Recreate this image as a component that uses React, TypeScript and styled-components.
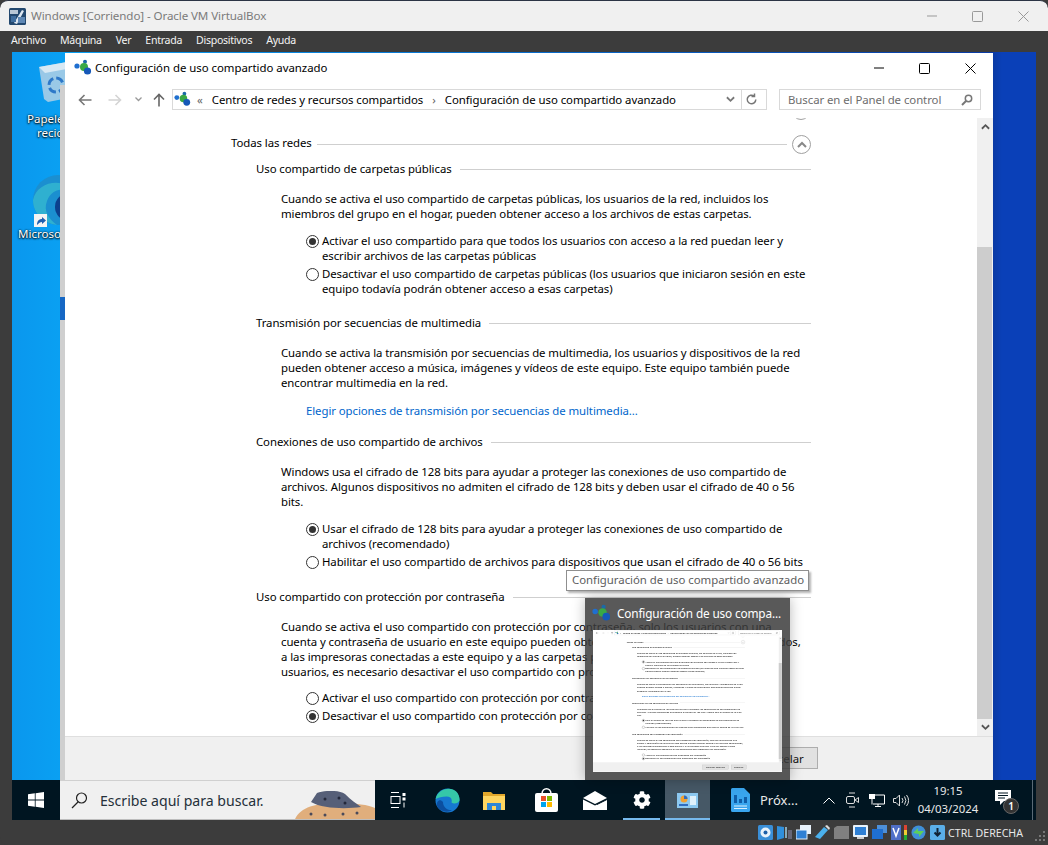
import React from "react";
import styled, { createGlobalStyle } from "styled-components";
import { FaCog } from "react-icons/fa";

const Global = createGlobalStyle`
  html, body { margin: 0; padding: 0; background: #3c3c3c; }
  * { box-sizing: border-box; }
`;
const UI = `"Noto Sans", "Liberation Sans", sans-serif`;

const Root = styled.div`
  width: 1048px; height: 845px; overflow: hidden; background: #3c3c3c;
  display: flex; flex-direction: column; font-family: ${UI}; position: relative;
  border-radius: 8px 8px 8px 8px;
`;
const HostTitle = styled.header`
  height: 31px; flex: none; background: #f0f0f0; display: flex; align-items: center;
  padding-left: 9px; border-top: 1px solid #2b3445; border-radius: 8px 8px 0 0;
`;
const HostTitleText = styled.span`
  margin-left: 5px; padding-bottom: 2px; font-size: 11.6px; letter-spacing: -.1px; color: #7b7b7b; white-space: nowrap; flex: 1;
`;
const HostButtons = styled.div`
  display: flex; align-items: center; gap: 35px; padding-right: 19px;
  svg { display: block; }
`;
const Menu = styled.nav`
  height: 21px; flex: none; display: flex; align-items: center; padding: 0 0 4px 11px; gap: 14px;
  color: #f4f4f4; font-size: 10.6px; letter-spacing: -.3px;
`;
const Stage = styled.div`
  flex: none; height: 768px; margin: 0 12px; display: flex; flex-direction: column;
`;
const Desktop = styled.main`
  height: 728px; flex: none; position: relative; overflow: hidden;
  background: linear-gradient(90deg, #0a97ee 0, #0aa0f2 48px, #0a3aa4 981px, #0a40b8 990px, #0a40b8 100%);
`;
const DeskIcon = styled.div<{ $left: number; $top: number }>`
  position: absolute; left: ${(p) => p.$left}px; top: ${(p) => p.$top}px;
`;
const DeskLabel = styled.div<{ $left: number; $top: number }>`
  position: absolute; left: ${(p) => p.$left}px; top: ${(p) => p.$top}px; color: #fff; font-size: 11.5px;
  line-height: 14px; white-space: nowrap; text-shadow: 0 1px 2px #000, 0 0 2px #000;
`;
const BackStrip = styled.div`
  position: absolute; left: 48px; top: 33px; bottom: 0; width: 6px; background: #cfcfcf;
  &::after { content: ""; position: absolute; left: 0; top: 212px; width: 5px; height: 23px; background: #1667c4; }
`;
const ExplorerWindow = styled.section`
  position: absolute; left: 53px; top: 1px; width: 928px; height: 727px; background: #fff;
  display: flex; flex-direction: column;
`;
const WinTitle = styled.div`
  height: 32px; flex: none; display: flex; align-items: center; padding: 0 17px 2px 9px;
`;
const WinTitleText = styled.span`
  flex: 1; margin-left: 3px; padding-bottom: 2px; font-size: 11.4px; letter-spacing: -.02px; color: #000; white-space: nowrap;
`;
const WinButtons = styled.div`
  display: flex; align-items: center; gap: 35px; svg { display: block; }
`;
const BodyWrap = styled.div`
  width: 928px; height: 695px; display: flex; flex-direction: column; background: #fff;
`;
const NavRow = styled.div`
  height: 33px; flex: none; display: flex; align-items: flex-start; padding: 4px 12px 0 13px;
`;
const NavArrows = styled.div`
  width: 94px; height: 21px; flex: none; display: flex; align-items: center; svg { display: block; }
`;
const NavSpace = styled.span<{ $w: number }>`
  width: ${(p) => p.$w}px; flex: none;
`;
const AddressBox = styled.div`
  width: 595px; height: 21px; flex: none; border: 1px solid #d9d9d9; display: flex; align-items: center;
  padding-left: 1px; font-size: 11.4px; letter-spacing: -.05px; color: #000; white-space: nowrap;
`;
const Crumb = styled.span<{ $left: number; $dim?: boolean }>`
  margin-left: ${(p) => p.$left}px; color: ${(p) => (p.$dim ? "#666" : "#000")};
`;
const AddressEnd = styled.div`
  margin-left: auto; width: 40px; height: 19px; display: flex; align-items: center; svg { display: block; }
`;
const Sep = styled.span`
  width: 1px; height: 19px; background: #d9d9d9; margin: 0 3px 0 6px;
`;
const SearchBox = styled.div`
  width: 202px; height: 21px; margin-left: 12px; flex: none; border: 1px solid #d9d9d9; display: flex;
  align-items: center; justify-content: space-between; padding: 0 7px 0 8px; font-size: 11.4px; letter-spacing: -.06px; color: #6d6d6d; white-space: nowrap;
`;
const Middle = styled.div`
  flex: 1; min-height: 0; display: flex;
`;
const Scroller = styled.div`
  flex: 1; min-width: 0; position: relative; overflow: hidden; padding: 17px 0 0 166px;
`;
const CutChevron = styled.div`
  position: absolute; left: 727px; top: -16px; width: 18px; height: 18px; border: 1px solid #a0a0a0; border-radius: 50%;
`;
const Bar = styled.div`
  width: 16px; flex: none; background: #f0f0f0; display: flex; flex-direction: column; align-items: center;
  svg { display: block; }
`;
const BarEnd = styled.div`
  height: 17px; width: 100%; flex: none; display: flex; align-items: center; justify-content: center;
`;
const BarGap = styled.div`height: 112px; flex: none;`;
const BarThumb = styled.div`
  flex: 1; width: 15px; margin-right: 1px; background: #cdcdcd;
`;
const HeadRow = styled.div<{ $top?: number }>`
  display: flex; align-items: center; height: 15px; margin-top: ${(p) => p.$top ?? 0}px; margin-right: 166px;
  font-size: 11.4px; letter-spacing: -.075px; color: #000; white-space: nowrap;
`;
const Rule = styled.span<{ $gap: number; $drop?: number }>`
  flex: 1; height: 1px; background: #cfcfcf; margin-left: ${(p) => p.$gap}px; margin-top: ${(p) => p.$drop ?? 2}px;
`;
const CircleBtn = styled.span`
  width: 19px; height: 19px; margin: 4px 0 0 5px; flex: none; border-radius: 50%; border: 1px solid #a0a0a0; display: flex; align-items: center; justify-content: center;
  svg { display: block; }
`;
const Section = styled.div`
  padding-left: 25px;
`;
const Para = styled.p<{ $top: number }>`
  margin: ${(p) => p.$top}px 0 0 25px; font-size: 11.4px; letter-spacing: -.075px; line-height: 15px; color: #000; white-space: nowrap;
`;
const LinkLine = styled.a`
  display: block; margin: 13px 0 0 50px; font-size: 11.4px; letter-spacing: -.075px; line-height: 15px; color: #0066cc; white-space: nowrap;
`;
const RadioRow = styled.label<{ $top: number }>`
  display: flex; margin: ${(p) => p.$top}px 0 0 50px; font-size: 11.4px; letter-spacing: -.075px; line-height: 15px; color: #000; white-space: nowrap;
`;
const RadioDot = styled.span<{ $on?: boolean }>`
  width: 13px; height: 13px; flex: none; margin: 2px 3px 0 0; border-radius: 50%; border: 1px solid #333; background: #fff;
  display: flex; align-items: center; justify-content: center;
  &::after { content: ""; width: 7px; height: 7px; border-radius: 50%; background: ${(p) => (p.$on ? "#333" : "transparent")}; }
`;
const Footer = styled.footer`
  height: 44px; flex: none; border-top: 1px solid #dfdfdf; background: #f0f0f0; display: flex; justify-content: flex-end;
  gap: 13px; padding: 10px 175px 0 0;
`;
const FootBtn = styled.button<{ $w: number }>`
  width: ${(p) => p.$w}px; height: 22px; border: 1px solid #adadad; background: #e1e1e1; padding: 0; font: 11.4px ${UI}; color: #111;
  display: flex; align-items: center; justify-content: center; gap: 4px;
`;
const Taskbar = styled.div`
  height: 40px; flex: none; background: #001521; display: flex; align-items: stretch; position: relative; color: #fff;
`;
const StartBtn = styled.div`
  width: 48px; flex: none; display: flex; align-items: center; justify-content: center;
`;
const SearchBar = styled.div`
  width: 315px; flex: none; background: #f0f0f0; border-bottom: 1px solid #bdbdbd; border-top: 1px solid #d0d0d0; display: flex; align-items: center;
  padding-left: 11px; color: #25303a; font-size: 14.1px; position: relative; white-space: nowrap; overflow: hidden;
`;
const SearchText = styled.span`margin-left: 12px;`;
const Rock = styled.svg`position: absolute; right: 0; bottom: 0; display: block;`;
const TaskIcon = styled.div<{ $w: number; $ml?: number; $active?: boolean; $under?: boolean }>`
  width: ${(p) => p.$w}px; margin-left: ${(p) => p.$ml ?? 0}px; flex: none; display: flex; align-items: center; justify-content: center; position: relative;
  background: ${(p) => (p.$active ? "#465866" : "transparent")};
  svg { display: block; }
  &::after { content: ""; position: absolute; left: 0; right: 0; bottom: 0; height: 2px; background: ${(p) => (p.$under ? "#76b9ed" : "transparent")}; }
`;
const TaskApp = styled.div`
  width: 100px; flex: none; display: flex; align-items: center; padding-left: 21px; gap: 10px; font-size: 13px; color: #eaeaea; white-space: nowrap;
  svg { display: block; }
`;
const Tray = styled.div`
  flex: 1; display: flex; align-items: center; padding-left: 7px; color: #fff;
  svg { display: block; }
`;
const TrayIcon = styled.div<{ $w: number }>`
  width: ${(p) => p.$w}px; flex: none; display: flex; justify-content: center;
`;
const Clock = styled.div`
  width: 72px; margin-left: 1px; flex: none; text-align: center; font-size: 11.4px; line-height: 18px; color: #e8e8e8;
`;
const Notify = styled.div`
  margin-left: 11px; position: relative; width: 24px; height: 24px; flex: none;
`;
const Badge = styled.span`
  position: absolute; left: 8px; top: 10px; width: 16px; height: 16px; border-radius: 50%; background: #333; border: 1px solid #666;
  font-size: 10px; line-height: 14px; text-align: center; color: #fff; font-weight: 600;
`;
const TaskEdge = styled.span`
  width: 1px; align-self: stretch; background: #5a6a76; margin-left: 13px; flex: none;
`;
const Status = styled.footer`
  height: 25px; flex: none; display: flex; align-items: center; justify-content: flex-end; padding: 0 25px 0 0; color: #e8e8e8; font-size: 10.6px;
  position: relative; white-space: nowrap;
`;
const StatusIcons = styled.div`
  display: flex; align-items: center; gap: 4px; margin-right: 3px; svg { display: block; }
`;
const Meter = styled.svg`margin-left: -3px;`;
const Grip = styled.svg`position: absolute; right: 1px; bottom: 2px; display: block;`;
const Tooltip = styled.div`
  position: absolute; left: 566px; top: 570px; width: 243px; height: 21px; background: #fff; border: 1px solid #8f8f8f; color: #5d5d5d;
  font-size: 11.4px; letter-spacing: -.03px; line-height: 17px; padding-left: 5px; white-space: nowrap; box-shadow: 2px 2px 2px rgba(0,0,0,.3);
`;
const Thumb = styled.div`
  position: absolute; left: 585px; top: 598px; width: 205px; height: 182px; background: rgba(60,60,60,.85); box-shadow: 0 0 12px rgba(0,0,0,.28);
`;
const ThumbHead = styled.div`
  height: 32px; display: flex; align-items: center; padding: 0 0 2px 7px; color: #fff; font-size: 11.8px; letter-spacing: -.15px; white-space: nowrap; gap: 6px;
`;
const Preview = styled.div`
  width: 189px; height: 142px; margin-left: 8px; overflow: hidden; background: #fff;
`;
const PreviewScale = styled.div`
  width: 928px; height: 695px; transform: scale(0.2037); transform-origin: 0 0; filter: blur(.25px);
`;

const NetIcon = ({ s = 18 }: { s?: number }) => (
  <svg width={s} height={s} viewBox="0 0 18 18">
    <circle cx="3" cy="7" r="2.6" fill="#1f6fd0" />
    <circle cx="11" cy="2.8" r="2" fill="#1b6aa8" />
    <circle cx="10" cy="8" r="4" fill="#3aa845" />
    <circle cx="13.5" cy="12" r="3.6" fill="#1658b8" />
  </svg>
);
const Line = ({ w = 10, c = "#888" }: { w?: number; c?: string }) => (
  <svg width={w} height="2" viewBox={`0 0 ${w} 2`}><path d={`M0 1H${w}`} stroke={c} strokeWidth="1" /></svg>
);
const Sq = ({ c }: { c: string }) => (
  <svg width="11" height="11" viewBox="0 0 11 11"><rect x=".5" y=".5" width="10" height="10" rx="1" fill="none" stroke={c} /></svg>
);
const X = ({ c }: { c: string }) => (
  <svg width="11" height="11" viewBox="0 0 11 11"><path d="M.5.5l10 10M10.5.5l-10 10" stroke={c} /></svg>
);
const Chev = ({ up, c = "#555", w = 10 }: { up?: boolean; c?: string; w?: number }) => (
  <svg width={w} height="7" viewBox="0 0 10 7"><path d={up ? "M1 6l4-4 4 4" : "M1 1l4 4 4-4"} fill="none" stroke={c} strokeWidth="2" /></svg>
);
const ArrowL = ({ c }: { c: string }) => (
  <svg width="14" height="12" viewBox="0 0 14 12"><path d="M13.5 6H1.5M6.5 1l-5 5 5 5" fill="none" stroke={c} strokeWidth="1.6" /></svg>
);
const ArrowR = ({ c }: { c: string }) => (
  <svg width="14" height="12" viewBox="0 0 14 12"><path d="M.5 6H12.500M7.500 1l5 5-5 5" fill="none" stroke={c} strokeWidth="1.6" /></svg>
);
const ArrowUp = () => (
  <svg width="12" height="14" viewBox="0 0 12 14"><path d="M6 13.5V1.5M1 6.5l5-5 5 5" fill="none" stroke="#666" strokeWidth="1.6" /></svg>
);
const HostLogo = () => (
  <svg width="17" height="17" viewBox="0 0 17 17">
    <rect width="17" height="17" rx="1.5" fill="#23486f" />
    <rect x="1" y="2" width="8" height="4" fill="#b9c7d6" />
    <path d="M5 15L13 2l2 1-7 13z" fill="#dfe8f2" />
    <rect x="9" y="9" width="7" height="6" fill="#5f88b5" />
    <rect x="2" y="8" width="5" height="6" fill="#3f6d9e" />
  </svg>
);

const WindowBody = () => (
  <BodyWrap>
    <NavRow>
      <NavArrows>
        <ArrowL c="#777" />
        <NavSpace $w={16} />
        <ArrowR c="#d4d4d4" />
        <NavSpace $w={13} />
        <svg width="7" height="5" viewBox="0 0 7 5"><path d="M.5.5l3 3 3-3" fill="none" stroke="#999" strokeWidth="1.3" /></svg>
        <NavSpace $w={11} />
        <ArrowUp />
      </NavArrows>
      <AddressBox>
        <NetIcon s={17} />
        <Crumb $left={6} $dim>«</Crumb>
        <Crumb $left={9}>Centro de redes y recursos compartidos</Crumb>
        <Crumb $left={9} $dim>›</Crumb>
        <Crumb $left={9}>Configuración de uso compartido avanzado</Crumb>
        <AddressEnd>
          <Chev c="#777" w={9} />
          <Sep />
          <svg width="13" height="13" viewBox="0 0 13 13"><path d="M10.8 6.5a4.3 4.3 0 1 1-1.6-3.4M9.5 .5v3h-3" fill="none" stroke="#777" strokeWidth="1.5" /></svg>
        </AddressEnd>
      </AddressBox>
      <SearchBox>
        Buscar en el Panel de control
        <svg width="12" height="12" viewBox="0 0 12 12"><circle cx="7.5" cy="4.5" r="3.2" fill="none" stroke="#777" strokeWidth="1.5" /><path d="M5 7l-4 4" stroke="#777" strokeWidth="2" /></svg>
      </SearchBox>
    </NavRow>
    <Middle>
      <Scroller>
        <CutChevron />
        <HeadRow>
          Todas las redes
          <Rule $gap={5} $drop={4} />
          <CircleBtn><Chev up c="#888" w={10} /></CircleBtn>
        </HeadRow>
        <Section>
          <HeadRow $top={11}>
            Uso compartido de carpetas públicas
            <Rule $gap={8} />
          </HeadRow>
          <Para $top={15}>
            Cuando se activa el uso compartido de carpetas públicas, los usuarios de la red, incluidos los<br />
            miembros del grupo en el hogar, pueden obtener acceso a los archivos de estas carpetas.
          </Para>
          <RadioRow $top={12}>
            <RadioDot $on />
            <span>Activar el uso compartido para que todos los usuarios con acceso a la red puedan leer y<br />escribir archivos de las carpetas públicas</span>
          </RadioRow>
          <RadioRow $top={3}>
            <RadioDot />
            <span>Desactivar el uso compartido de carpetas públicas (los usuarios que iniciaron sesión en este<br />equipo todavía podrán obtener acceso a esas carpetas)</span>
          </RadioRow>
          <HeadRow $top={19}>
            Transmisión por secuencias de multimedia
            <Rule $gap={8} />
          </HeadRow>
          <Para $top={15}>
            Cuando se activa la transmisión por secuencias de multimedia, los usuarios y dispositivos de la red<br />
            pueden obtener acceso a música, imágenes y vídeos de este equipo. Este equipo también puede<br />
            encontrar multimedia en la red.
          </Para>
          <LinkLine>Elegir opciones de transmisión por secuencias de multimedia...</LinkLine>
          <HeadRow $top={16}>
            Conexiones de uso compartido de archivos
            <Rule $gap={8} />
          </HeadRow>
          <Para $top={15}>
            Windows usa el cifrado de 128 bits para ayudar a proteger las conexiones de uso compartido de<br />
            archivos. Algunos dispositivos no admiten el cifrado de 128 bits y deben usar el cifrado de 40 o 56<br />
            bits.
          </Para>
          <RadioRow $top={12}>
            <RadioDot $on />
            <span>Usar el cifrado de 128 bits para ayudar a proteger las conexiones de uso compartido de<br />archivos (recomendado)</span>
          </RadioRow>
          <RadioRow $top={3}>
            <RadioDot />
            <span>Habilitar el uso compartido de archivos para dispositivos que usan el cifrado de 40 o 56 bits</span>
          </RadioRow>
          <HeadRow $top={20}>
            Uso compartido con protección por contraseña
            <Rule $gap={8} />
          </HeadRow>
          <Para $top={15}>
            Cuando se activa el uso compartido con protección por contraseña, solo los usuarios con una<br />
            cuenta y contraseña de usuario en este equipo pueden obtener acceso a los archivos compartidos,<br />
            a las impresoras conectadas a este equipo y a las carpetas públicas. Para dar acceso a otros<br />
            usuarios, es necesario desactivar el uso compartido con protección por contraseña.
          </Para>
          <RadioRow $top={11}>
            <RadioDot />
            <span>Activar el uso compartido con protección por contraseña</span>
          </RadioRow>
          <RadioRow $top={3}>
            <RadioDot $on />
            <span>Desactivar el uso compartido con protección por contraseña</span>
          </RadioRow>
        </Section>
      </Scroller>
      <Bar>
        <BarEnd><Chev up c="#555" w={9} /></BarEnd>
        <BarGap />
        <BarThumb />
        <BarEnd><Chev c="#555" w={9} /></BarEnd>
      </Bar>
    </Middle>
    <Footer>
      <FootBtn $w={128}>Guardar cambios</FootBtn>
      <FootBtn $w={75}>Cancelar</FootBtn>
    </Footer>
  </BodyWrap>
);

export default function App() {
  return (
    <Root>
      <Global />
      <HostTitle>
        <HostLogo />
        <HostTitleText>Windows [Corriendo] - Oracle VM VirtualBox</HostTitleText>
        <HostButtons>
          <Line c="#999" />
          <Sq c="#999" />
          <X c="#999" />
        </HostButtons>
      </HostTitle>
      <Menu>
        <span>Archivo</span><span>Máquina</span><span>Ver</span><span>Entrada</span><span>Dispositivos</span><span>Ayuda</span>
      </Menu>
      <Stage>
        <Desktop>
          <DeskIcon $left={26} $top={9}>
            <svg width="34" height="42" viewBox="0 0 34 42">
              <path d="M1 6l28-5 5 6-4 30-20 4-4-3z" fill="#a8cde6" opacity=".9" />
              <path d="M1 6l28-5 5 6-27 5z" fill="#d8e9f4" />
              <circle cx="18" cy="24" r="7" fill="none" stroke="#2e78c8" strokeWidth="3" strokeDasharray="8 3" />
            </svg>
          </DeskIcon>
          <DeskLabel $left={15} $top={60}>Papelera de</DeskLabel>
          <DeskLabel $left={25} $top={74}>reciclaje</DeskLabel>
          <DeskIcon $left={21} $top={123}>
            <svg width="50" height="50" viewBox="0 0 50 50">
              <circle cx="25" cy="25" r="25" fill="#1b8fd0" />
              <path d="M0 25C4 6 30 2 42 16 30 12 18 14 14 26 10 36 16 44 24 50 10 48 0 38 0 25z" fill="#2fb0d0" />
              <circle cx="36" cy="32" r="14" fill="#0c3f8c" />
            </svg>
          </DeskIcon>
          <DeskIcon $left={22} $top={158}>
            <svg width="13" height="13" viewBox="0 0 13 13">
              <rect width="13" height="13" fill="#f4f4f4" />
              <path d="M3 11c0-4 2-6 5-6V3l4 3.500-4 3.500V8c-2 0-3 1-5 3z" fill="#1f5fb0" />
            </svg>
          </DeskIcon>
          <DeskLabel $left={6} $top={175}>Microsoft Edge</DeskLabel>
          <BackStrip />
          <ExplorerWindow>
            <WinTitle>
              <NetIcon />
              <WinTitleText>Configuración de uso compartido avanzado</WinTitleText>
              <WinButtons>
                <Line c="#000" />
                <Sq c="#000" />
                <X c="#000" />
              </WinButtons>
            </WinTitle>
            <WindowBody />
          </ExplorerWindow>
        </Desktop>
        <Taskbar>
          <StartBtn>
            <svg width="16" height="16" viewBox="0 0 16 16"><path d="M0 2.300l6.800-1v6.300H0zM7.600 1.200L16 0v7.600H7.600zM0 8.400h6.800v6.300l-6.800-1zM7.600 8.400H16V16l-8.400-1.200z" fill="#fff" /></svg>
          </StartBtn>
          <SearchBar>
            <svg width="17" height="17" viewBox="0 0 17 17"><circle cx="10.500" cy="6" r="5" fill="none" stroke="#222" strokeWidth="1.200" /><path d="M7 10l-6 6" stroke="#222" strokeWidth="1.300" /></svg>
            <SearchText>Escribe aquí para buscar.</SearchText>
            <Rock width="80" height="28" viewBox="0 0 80 28">
              <path d="M0 28C6 16 20 12 44 12c16 0 30 2 36 5v11z" fill="#e0ae7c" />
              <path d="M16 11L22 2c8-3 22-3 28 1 6 6 12 10 16 13-14 2-38 2-50-5z" fill="#565f78" />
              <circle cx="30" cy="8" r="1.500" fill="#23283a" /><circle cx="44" cy="7" r="1.500" fill="#23283a" /><circle cx="50" cy="12" r="1.500" fill="#23283a" />
              <circle cx="16" cy="23" r="1.500" fill="#4a4a5a" /><circle cx="30" cy="24" r="1.500" fill="#4a4a5a" /><circle cx="48" cy="23" r="1.500" fill="#4a4a5a" /><circle cx="62" cy="22" r="1.500" fill="#4a4a5a" />
            </Rock>
          </SearchBar>
          <TaskIcon $w={45}>
            <svg width="16" height="16" viewBox="0 0 16 16" fill="none" stroke="#fff"><path d="M1 .5h8M1 15.500h8" /><rect x="1" y="4.500" width="9" height="7" /><rect x="12.500" y="1" width="3" height="3" fill="#fff" stroke="none" /><rect x="12.500" y="5.500" width="3" height="3" fill="#fff" stroke="none" /><path d="M14 10.500v5" /></svg>
          </TaskIcon>
          <TaskIcon $w={55}>
            <svg width="25" height="25" viewBox="0 0 25 25">
              <circle cx="12.500" cy="12.500" r="12" fill="#1678d0" />
              <path d="M.7 11C2 3 11-1 18 1.500c4 1.500 7 6 6.500 11-1 3-6 4-8 2 1-4-1-6-5-6-4.500 0-8 1-10.800 2.500z" fill="#35c8a8" />
              <path d="M8 14c0 5 4 8.500 9 8-4 3-12 2-15-4C1 13 5 10 8 14z" fill="#0b4fa0" />
            </svg>
          </TaskIcon>
          <TaskIcon $w={38}>
            <svg width="22" height="19" viewBox="0 0 22 19"><path d="M0 1h8l2 2h12v3H0z" fill="#e2a72b" /><rect y="5" width="22" height="14" fill="#ffd560" /><rect x="4" y="12" width="14" height="7" fill="#2e86d8" /><rect x="9" y="15" width="4" height="4" fill="#ffd560" /></svg>
          </TaskIcon>
          <TaskIcon $w={67}>
            <svg width="23" height="24" viewBox="0 0 23 24"><path d="M7 6c0-7 9-7 9 0" fill="none" stroke="#fff" strokeWidth="1.500" /><rect y="5" width="23" height="19" rx="2" fill="#fff" /><rect x="6" y="8" width="5" height="5" fill="#e8512c" /><rect x="12" y="8" width="5" height="5" fill="#7fba00" /><rect x="6" y="14" width="5" height="5" fill="#00a4ef" /><rect x="12" y="14" width="5" height="5" fill="#ffb900" /></svg>
          </TaskIcon>
          <TaskIcon $w={30}>
            <svg width="24" height="19" viewBox="0 0 24 19"><path d="M0 7L12 0l12 7-12 6z" fill="#fff" /><path d="M0 8.500v10.500h24V8.500l-12 6z" fill="#fff" /><path d="M14 13.500l10-5" stroke="#001521" strokeWidth="1" /></svg>
          </TaskIcon>
          <TaskIcon $w={37} $ml={13} $under>
            <FaCog size={18} color="#fff" />
          </TaskIcon>
          <TaskIcon $w={45} $ml={5} $active $under>
            <svg width="21" height="15" viewBox="0 0 21 15"><rect width="21" height="15" fill="#8cc8f0" /><circle cx="7" cy="6" r="3.500" fill="#f0a030" /><path d="M7 6V2.500A3.500 3.500 0 0 1 10.500 6z" fill="#2e6cc0" /><rect x="13" y="3" width="6" height="9" fill="#dff0fb" /><rect x="2" y="11" width="9" height="2" fill="#2e6cc0" /></svg>
          </TaskIcon>
          <TaskApp>
            <svg width="19" height="24" viewBox="0 0 19 24"><path d="M0 1.500A1.500 1.500 0 0 1 1.500 0H13l6 6v16.500a1.500 1.500 0 0 1-1.500 1.500h-16A1.500 1.500 0 0 1 0 22.500z" fill="#39a5ee" /><rect x="3" y="7" width="3" height="8" fill="#0f5ea8" /><rect x="8" y="11" width="3" height="4" fill="#0f5ea8" /><rect x="13" y="9" width="3" height="6" fill="#0f5ea8" /><path d="M3 18h13M3 20.500h13" stroke="#d9f0ff" /></svg>
            Próx...
          </TaskApp>
          <Tray>
            <TrayIcon $w={24}><svg width="12" height="7" viewBox="0 0 12 7"><path d="M.5 6.500L6 1l5.500 5.500" fill="none" stroke="#fff" /></svg></TrayIcon>
            <TrayIcon $w={22}><svg width="13" height="16" viewBox="0 0 13 16" fill="none" stroke="#ddd"><path d="M3 1h6M3 15h6" /><rect x=".5" y="4.500" width="8" height="7" rx="1.500" /><path d="M9 8l3.500-2.500v5z" /></svg></TrayIcon>
            <TrayIcon $w={28}><svg width="16" height="13" viewBox="0 0 16 13" fill="none" stroke="#fff"><rect x=".5" y=".5" width="5" height="4" fill="#fff" /><path d="M3 1h12.500v9H4M3 4.500v6M9 10v2.500M6 12.500h6" /></svg></TrayIcon>
            <TrayIcon $w={20}><svg width="16" height="13" viewBox="0 0 16 13" fill="none" stroke="#ddd"><path d="M.5 4.500h2.500L6.500 1v11L3 8.500H.5z" /><path d="M9 4a4 4 0 0 1 0 5M11.500 2.500a7 7 0 0 1 0 8M13.500 1a9 9 0 0 1 0 11" /></svg></TrayIcon>
            <Clock>19:15<br />04/03/2024</Clock>
            <Notify>
              <svg width="17" height="17" viewBox="0 0 17 17" style={{ marginTop: 2 }}><path d="M0 0h16v11H9l-4 4v-4H0z" fill="#fff" /><path d="M3 3h10M3 5.500h10M3 8h7" stroke="#001521" /></svg>
              <Badge>1</Badge>
            </Notify>
            <TaskEdge />
          </Tray>
        </Taskbar>
      </Stage>
      <Status>
        <StatusIcons>
          <svg width="15" height="15" viewBox="0 0 15 15"><rect width="15" height="15" rx="1.500" fill="#3a8fd8" /><circle cx="7.500" cy="7.500" r="5" fill="#e8f2fb" /><circle cx="7.500" cy="7.500" r="2" fill="#1c5fa8" /></svg>
          <svg width="15" height="15" viewBox="0 0 15 15"><path d="M0 1l7 1v11l-7 2z" fill="#2f8fdc" /><rect x="8" y="2" width="2" height="11" fill="#8ab" /><rect x="11" y="5" width="4" height="9" fill="#667" /></svg>
          <svg width="15" height="15" viewBox="0 0 15 15"><rect x="4" y="0" width="11" height="9" fill="#e8f2fb" /><rect x="0" y="5" width="11" height="9" fill="#2f80d4" stroke="#e8f2fb" /></svg>
          <svg width="15" height="15" viewBox="0 0 15 15"><path d="M0 12L9 2l4 3-8 9z" fill="#4ab0ec" /><path d="M10 1l2-1 3 3-1 2z" fill="#ddd" /></svg>
          <svg width="15" height="15" viewBox="0 0 15 15"><path d="M0 3l3-2h12v13H0z" fill="#808080" /></svg>
          <svg width="15" height="15" viewBox="0 0 15 15"><rect width="15" height="12" rx="1" fill="#e8f2fb" /><rect x="2" y="2" width="11" height="8" fill="#2f80d4" /><rect x="4" y="12" width="7" height="2" fill="#ccc" /></svg>
          <svg width="15" height="15" viewBox="0 0 15 15"><rect x="5" y="0" width="10" height="8" fill="#4d8fd8" /><rect x="0" y="4" width="11" height="10" fill="#1f6fd0" /></svg>
          <svg width="12" height="15" viewBox="0 0 12 15"><rect width="10" height="15" fill="#4f6fc8" /><path d="M2 3l3 8 3-8" fill="none" stroke="#fff" strokeWidth="1.500" /></svg>
          <Meter width="3" height="15" viewBox="0 0 3 15"><rect width="3" height="5" fill="#d43" /><rect y="5" width="3" height="5" fill="#ec3" /><rect y="10" width="3" height="5" fill="#2a3" /></Meter>
          <svg width="15" height="15" viewBox="0 0 15 15"><circle cx="7.500" cy="7.500" r="7" fill="#3f8fd8" /><path d="M2 8l5-5v3h6l-5 6V9z" fill="#5ccf5c" /></svg>
          <svg width="15" height="15" viewBox="0 0 15 15"><rect width="15" height="15" rx="1.500" fill="#5aaee8" /><path d="M7.500 3v7M4.500 7.500l3 3 3-3" fill="none" stroke="#123" strokeWidth="2" /></svg>
        </StatusIcons>
        CTRL DERECHA
        <Grip width="14" height="14" viewBox="0 0 14 14" fill="#777"><rect x="10" y="2" width="2" height="2" /><rect x="6" y="6" width="2" height="2" /><rect x="10" y="6" width="2" height="2" /><rect x="2" y="10" width="2" height="2" /><rect x="6" y="10" width="2" height="2" /><rect x="10" y="10" width="2" height="2" /></Grip>
      </Status>
      <Tooltip>Configuración de uso compartido avanzado</Tooltip>
      <Thumb>
        <ThumbHead><NetIcon s={19} />Configuración de uso compa...</ThumbHead>
        <Preview><PreviewScale><WindowBody /></PreviewScale></Preview>
      </Thumb>
    </Root>
  );
}
